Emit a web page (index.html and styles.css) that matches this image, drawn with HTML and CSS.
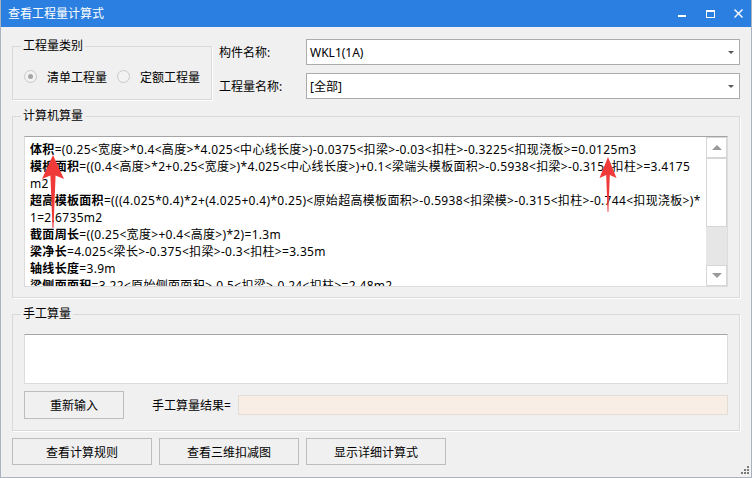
FILE: index.html
```html
<!DOCTYPE html>
<html lang="zh-CN">
<head>
<meta charset="utf-8">
<title>查看工程量计算式</title>
<link rel="stylesheet" href="styles.css">
</head>
<body>
<div class="window">
  <div class="titlebar">
    <span class="title">查看工程量计算式</span>
    <div class="controls">
      <span class="ctl"><svg width="8" height="8" viewBox="0 0 8 8"><rect x="0" y="5" width="8" height="2" fill="#fff"/></svg></span>
      <span class="ctl"><svg width="9" height="8" viewBox="0 0 9 8"><rect x="0.5" y="0.5" width="8" height="7" fill="none" stroke="#fff"/><rect x="0" y="0" width="9" height="2" fill="#fff"/></svg></span>
      <span class="ctl"><svg width="9" height="9" viewBox="0 0 9 9"><path d="M0.5 0.5L8.5 8.5M8.5 0.5L0.5 8.5" stroke="#fff" stroke-width="1.4"/></svg></span>
    </div>
  </div>
  <div class="content">
    <div class="top-row">
      <fieldset class="group group-type">
        <legend>工程量类别</legend>
        <div class="radios">
          <label class="radio"><span class="radio-dot checked"></span>清单工程量</label>
          <label class="radio"><span class="radio-dot"></span>定额工程量</label>
        </div>
      </fieldset>
      <div class="fields">
        <div class="field-row">
          <span class="field-label">构件名称:</span>
          <div class="combo"><span class="combo-value">WKL1(1A)</span><span class="combo-arrow"></span></div>
        </div>
        <div class="field-row">
          <span class="field-label">工程量名称:</span>
          <div class="combo"><span class="combo-value">[全部]</span><span class="combo-arrow"></span></div>
        </div>
      </div>
    </div>

    <fieldset class="group group-calc">
      <legend>计算机算量</legend>
      <div class="formula-box">
        <div class="formula-text">
          <div class="line"><b>体积</b>=(0.25&lt;宽度&gt;*0.4&lt;高度&gt;*4.025&lt;中心线长度&gt;)-0.0375&lt;扣梁&gt;-0.03&lt;扣柱&gt;-0.3225&lt;扣现浇板&gt;=0.0125m3</div>
          <div class="line"><b>模板面积</b>=((0.4&lt;高度&gt;*2+0.25&lt;宽度&gt;)*4.025&lt;中心线长度&gt;)+0.1&lt;梁端头模板面积&gt;-0.5938&lt;扣梁&gt;-0.315&lt;扣柱&gt;=3.4175<br>m2</div>
          <div class="line"><b>超高模板面积</b>=(((4.025*0.4)*2+(4.025+0.4)*0.25)&lt;原始超高模板面积&gt;-0.5938&lt;扣梁模&gt;-0.315&lt;扣柱&gt;-0.744&lt;扣现浇板&gt;)*<br>1=2.6735m2</div>
          <div class="line"><b>截面周长</b>=((0.25&lt;宽度&gt;+0.4&lt;高度&gt;)*2)=1.3m</div>
          <div class="line"><b>梁净长</b>=4.025&lt;梁长&gt;-0.375&lt;扣梁&gt;-0.3&lt;扣柱&gt;=3.35m</div>
          <div class="line"><b>轴线长度</b>=3.9m</div>
          <div class="line"><b>梁侧面面积</b>=3.22&lt;原始侧面面积&gt;-0.5&lt;扣梁&gt;-0.24&lt;扣柱&gt;=2.48m2</div>
        </div>
        <div class="scrollbar">
          <div class="sb-btn"><span class="sb-up"></span></div>
          <div class="sb-thumb"></div>
          <div class="sb-track"></div>
          <div class="sb-btn"><span class="sb-down"></span></div>
        </div>
      </div>
    </fieldset>

    <fieldset class="group group-manual">
      <legend>手工算量</legend>
      <div class="manual-input"></div>
      <div class="manual-row">
        <button class="btn btn-reset">重新输入</button>
        <span class="result-label">手工算量结果=</span>
        <div class="result-field"></div>
      </div>
    </fieldset>

    <div class="actions">
      <button class="btn btn-action">查看计算规则</button>
      <button class="btn btn-action">查看三维扣减图</button>
      <button class="btn btn-action">显示详细计算式</button>
    </div>
  </div>

  <svg class="arrow arrow-1" width="22" height="74" viewBox="0 0 22 74"><path d="M11 0 L22 24 L13.6 20.5 L11.5 73 L10.5 73 L8.4 20.5 L0 24 Z" fill="#f03a3a"/></svg>
  <svg class="arrow arrow-2" width="18" height="56" viewBox="0 0 18 56"><path d="M9 0 L17.5 21 L10.8 18 L9.4 55 L8.6 55 L7.2 18 L0.5 21 Z" fill="#f03a3a"/></svg>

  <div class="grip">
    <span class="g g1"></span><span class="g g2"></span><span class="g g3"></span>
    <span class="g g4"></span><span class="g g5"></span><span class="g g6"></span>
  </div>
</div>
</body>
</html>
```

FILE: styles.css
```css
* { box-sizing: border-box; }

body {
  margin: 0;
  font-family: "Noto Sans", "Noto Sans CJK SC", sans-serif;
  font-size: 12px;
  color: #000;
  background: #f0f0f0;
}

.window {
  position: relative;
  width: 752px;
  height: 478px;
  background: #f0f0f0;
  border: 1px solid #aab3bf;
  border-top: 0;
  overflow: hidden;
}

.titlebar {
  height: 27px;
  margin: 0 -1px;
  background: #2b7fe0;
  color: #fff;
  display: flex;
  align-items: center;
  padding-left: 8px;
}

.title {
  flex: 1;
  font-size: 12px;
  line-height: 14px;
}

.controls {
  display: flex;
  height: 27px;
}

.ctl {
  width: 28px;
  height: 27px;
  display: flex;
  align-items: center;
  justify-content: center;
}

.ctl svg { display: block; }

.content {
  padding: 12px 11px 0;
}

.top-row {
  display: flex;
  gap: 7px;
  height: 61px;
}

.group {
  margin: 0;
  padding: 0 11px;
  border: 1px solid #d9d9d9;
  box-shadow: 1px 1px 0 #fff;
  min-width: 0;
}

.group legend {
  padding: 0 2px;
  margin-left: -3px;
  line-height: 14px;
  font-size: 12px;
}

.group-type {
  width: 200px;
  flex: none;
}

.radios {
  display: flex;
  align-items: center;
  margin-top: 15px;
  height: 17px;
  white-space: nowrap;
}

.radio {
  display: inline-flex;
  align-items: center;
  gap: 10px;
  margin-right: 10px;
  white-space: nowrap;
  flex: none;
}

.radio-dot {
  width: 13px;
  height: 13px;
  border-radius: 50%;
  border: 1px solid #c9c9c9;
  background: #f2f2f2;
  display: inline-flex;
  align-items: center;
  justify-content: center;
  flex: none;
}

.radio-dot.checked::after {
  content: "";
  width: 5px;
  height: 5px;
  border-radius: 50%;
  background: #a6a6a6;
}

.fields {
  flex: 1;
  display: flex;
  flex-direction: column;
  gap: 8px;
}

.field-row {
  display: flex;
  align-items: center;
  height: 26px;
}

.field-label {
  width: 87px;
  flex: none;
}

.combo {
  flex: 1;
  height: 26px;
  border: 1px solid #acacac;
  background: #fff;
  display: flex;
  align-items: center;
  padding: 0 5px 0 3px;
}

.combo-value { flex: 1; }

.combo-arrow {
  width: 0;
  height: 0;
  border-left: 3px solid transparent;
  border-right: 3px solid transparent;
  border-top: 3px solid #5a5a5a;
}

.group-calc {
  margin-top: 9px;
  padding-bottom: 10px;
}

.formula-box {
  margin-top: 13px;
  height: 151px;
  display: flex;
  background: #fff;
  border: 1px solid #dcdcdc;
  border-top-color: #a5a5a5;
}

.formula-text {
  flex: 1;
  min-width: 0;
  overflow: hidden;
  padding: 4px 0 0 5px;
  line-height: 17px;
  letter-spacing: 0.32px;
  white-space: nowrap;
}

.formula-text b { font-weight: 700; }

.scrollbar {
  width: 21px;
  flex: none;
  display: flex;
  flex-direction: column;
  background: #e8e8e8;
}

.sb-btn {
  height: 21px;
  background: #fff;
  border: 1px solid #d6d6d6;
  display: flex;
  align-items: center;
  justify-content: center;
}

.sb-up, .sb-down {
  width: 0;
  height: 0;
  border-left: 5px solid transparent;
  border-right: 5px solid transparent;
}

.sb-up { border-bottom: 5px solid #9a9a9a; }
.sb-down { border-top: 5px solid #9a9a9a; }

.sb-thumb {
  height: 69px;
  background: #fff;
  border: 1px solid #d6d6d6;
}

.sb-track {
  flex: 1;
  background: #e6e6e6;
}

.group-manual {
  margin-top: 9px;
  padding-bottom: 11px;
}

.manual-input {
  margin-top: 13px;
  height: 50px;
  background: #fff;
  border: 1px solid #dcdcdc;
  border-top-color: #a5a5a5;
}

.manual-row {
  margin-top: 7px;
  display: flex;
  align-items: center;
  height: 28px;
}

.btn {
  font-family: inherit;
  font-size: 12px;
  color: #000;
  background: #f0f0f0;
  border: 1px solid #bdbdbd;
  padding: 0;
}

.btn-reset {
  width: 100px;
  height: 28px;
}

.result-label {
  margin-left: 28px;
  margin-right: 7px;
}

.result-field {
  flex: 1;
  height: 20px;
  background: #f9eee5;
  border: 1px solid #e2dcd6;
}

.actions {
  margin-top: 7px;
  display: flex;
  gap: 7px;
}

.btn-action {
  width: 140px;
  height: 27px;
}

.arrow {
  position: absolute;
  display: block;
}

.arrow-1 { left: 41px; top: 155px; }
.arrow-2 { left: 598px; top: 157px; }

.grip {
  position: absolute;
  right: 2px;
  bottom: 3px;
  width: 8px;
  height: 8px;
}

.g {
  position: absolute;
  width: 2px;
  height: 2px;
  background: #7b7b7b;
}

.g1 { left: 6px; top: 0; }
.g2 { left: 3px; top: 3px; }
.g3 { left: 6px; top: 3px; }
.g4 { left: 0; top: 6px; }
.g5 { left: 3px; top: 6px; }
.g6 { left: 6px; top: 6px; }
```
